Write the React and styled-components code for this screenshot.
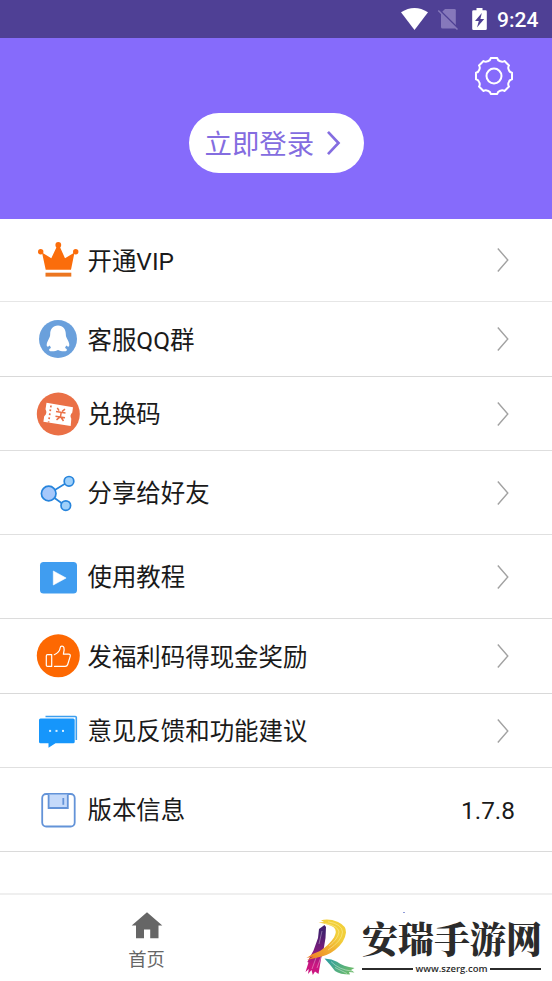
import React from 'react'
import styled, { createGlobalStyle } from 'styled-components'

const GlobalStyle = createGlobalStyle`
  * { box-sizing: border-box; }
  body {
    margin: 0;
    background: #fff;
    font-family: Roboto, "Noto Sans CJK SC", sans-serif;
  }
  svg { display: block; flex: none; overflow: visible; }
`

/* gear outline with eight soft teeth */
function gearPath(c, outer, inner) {
  const pt = (r, deg) => {
    const a = (deg * Math.PI) / 180
    return `${(c + r * Math.sin(a)).toFixed(2)} ${(c - r * Math.cos(a)).toFixed(2)}`
  }
  let d = `M${pt(outer, -10)}`
  for (let i = 0; i < 8; i++) {
    const t = i * 45
    d += `L${pt(outer, t + 10)}`
    d += `Q${pt(inner, t + 13)} ${pt(inner, t + 22.5)}`
    d += `Q${pt(inner, t + 32)} ${pt(outer, t + 35)}`
  }
  return d + 'Z'
}

function CrownIcon() {
  return (
    <svg width="44" height="44" viewBox="0 0 44 44" fill="#fb6d0b">
      <path d="M9.700 31.700 6 14.500 15.300 20.300 21.300 7.500h2L29 20.300 38.500 14.500 35 31.700Z" />
      <circle cx="4.700" cy="13.700" r="2.700" />
      <circle cx="22.300" cy="6.900" r="2.900" />
      <circle cx="39.700" cy="13.700" r="2.700" />
      <rect x="9.500" y="34.700" width="25.800" height="3.900" fill="#ec7620" />
    </svg>
  )
}

function QQIcon() {
  return (
    <svg width="44" height="44" viewBox="0 0 44 44">
      <circle cx="22" cy="22" r="19" fill="#6aa0dc" />
      <path
        fill="#fff"
        d="M22 8.500C16.800 8.500 14.200 12.200 14.200 17 14.200 19.500 13.500 20.500 12.400 22.700 10.900 25.500 10.200 28 11 29.300 11.700 30 12.800 29.500 13.800 28.600L15 31C13.400 31.700 12.700 32.600 13.200 33.500 14 34.800 19.500 34.600 22 33 24.500 34.600 30 34.800 30.800 33.500 31.300 32.600 30.600 31.700 29 31L30.200 28.600C31.200 29.500 32.300 30 33 29.300 33.800 28 33.100 25.500 31.600 22.700 30.500 20.500 29.800 19.500 29.800 17 29.800 12.200 27.200 8.500 22 8.500Z"
      />
    </svg>
  )
}

function TicketIcon() {
  return (
    <svg width="44" height="44" viewBox="0 0 44 44">
      <circle cx="22.300" cy="22" r="21.500" fill="#ea7046" />
      <path
        fill="#fff"
        d="M10.500 10.800 37 15.200 36.300 20.500Q33.300 23.200 35.300 26.800L34.700 34 7.400 29.700 8.200 24.200Q11.800 21.300 9.500 17.300Z"
      />
      <path d="m15 13.500-2.400 17" stroke="#ea7046" strokeWidth="1.700" strokeDasharray="1.800 2.200" />
      <path
        d="m21.300 15.800 1.700 2.800m6-1.400-2.800 2.200m-6.200.1 9.500 1.500M19.500 24.200l9.500 1.500M25.200 20.300l-.7 4.200-4 3.300m4-3.300 3 4.500"
        stroke="#ea7046"
        strokeWidth="1.500"
        fill="none"
      />
    </svg>
  )
}

function ShareIcon() {
  return (
    <svg width="44" height="44" viewBox="0 0 44 44" stroke="#2684dc" strokeWidth="1.700">
      <path d="M18 19.500 29 12.800M18.500 27l7 5" />
      <circle cx="12.700" cy="22.500" r="7.300" fill="#a6c8fb" />
      <circle cx="33" cy="10.300" r="4.800" fill="#9fd0fa" />
      <circle cx="29.800" cy="34.600" r="4.800" fill="#9fd0fa" />
    </svg>
  )
}

function PlayIcon() {
  return (
    <svg width="44" height="44" viewBox="0 0 44 44">
      <rect x="4" y="6.900" width="37" height="31.700" rx="3.600" fill="#409df0" />
      <path d="M17.300 16v14l12.800-7Z" fill="#fff" stroke="#fff" strokeWidth=".6" strokeLinejoin="round" />
    </svg>
  )
}

function ThumbIcon() {
  return (
    <svg width="44" height="44" viewBox="0 0 44 44">
      <circle cx="22.300" cy="21.800" r="21.500" fill="#fd6802" />
      <g fill="none" stroke="#fff" strokeWidth="1.200" strokeLinecap="round" strokeLinejoin="round">
        <path d="M11.500 20.700h4.200v11.700h-4.200q-1.200 0-1.200-1.200v-9.300q0-1.200 1.200-1.200Z" />
        <path d="M18.500 32.400h10.700q1.900 0 2.500-1.900l2.500-8.200q.5-2.100-1.600-2.100h-5.200c.8-2.700 1-5.200.5-6.700-.7-1.900-3.500-1.700-3.700.3-.4 3.200-2.800 5.700-5.900 6.900" />
      </g>
    </svg>
  )
}

function MessageIcon() {
  return (
    <svg width="44" height="44" viewBox="0 0 44 44">
      <path d="M9.500 7.500H39.300Q40.300 7.500 40.300 8.500V31" fill="none" stroke="#3d9ff0" strokeWidth="1.600" />
      <path
        d="M4.500 9.500H37.200Q38.700 9.500 38.700 11V32.700Q38.700 34.200 37.200 34.200H19.500L12.500 38.800V34.200H4.500Q3 34.200 3 32.700V11Q3 9.500 4.500 9.500Z"
        fill="#1696fb"
      />
      <g fill="#d8efff">
        <rect x="13.100" y="20.900" width="2" height="2" />
        <rect x="19.500" y="20.900" width="2" height="2" />
        <rect x="26" y="20.900" width="2" height="2" />
      </g>
    </svg>
  )
}

function FloppyIcon() {
  return (
    <svg width="44" height="44" viewBox="0 0 44 44" fill="none" stroke="#6393d8" strokeWidth="1.800">
      <rect x="6.200" y="6" width="32.500" height="32.500" rx="4" />
      <path d="M12.600 6.500V20H31.800V6.500" fill="#c5dafa" />
      <path d="M27.300 10v6.800" />
    </svg>
  )
}

function Arrow() {
  return (
    <svg width="18" height="24" viewBox="0 0 18 24" fill="none" stroke="#a2a2a2" strokeWidth="1.400">
      <path d="M.8.500 10.800 12 .8 23.500" />
    </svg>
  )
}

function BrandMark() {
  return (
    <svg width="54" height="64" viewBox="0 0 54 64" fill="none">
      <defs>
        <linearGradient id="stem" x1="0" y1="0" x2="0" y2="1">
          <stop offset=".15" stopColor="#43206f" />
          <stop offset=".5" stopColor="#7c1c7c" />
          <stop offset=".8" stopColor="#cb1580" />
        </linearGradient>
        <linearGradient id="bowl" x1="1" y1="0" x2="0" y2="1">
          <stop offset=".3" stopColor="#f2cf3a" />
          <stop offset="1" stopColor="#ee7a23" />
        </linearGradient>
        <linearGradient id="leg" x1="0" y1="0" x2="1" y2=".4">
          <stop offset="0" stopColor="#2b9ba6" />
          <stop offset="1" stopColor="#69b96c" />
        </linearGradient>
      </defs>
      <path d="M99 -1.500h2" stroke="#8f9bd8" strokeWidth="1" />
      <path
        fill="url(#stem)"
        d="M15 15 20.500 11 22 13 21.500 24 19.500 36 17 45 14.500 60 11 57.500 8.800 61 7.500 56 4 60 4.800 55 1.500 58 4.500 48.500 3.300 48 9.500 36.500 14 24Z"
      />
      <path stroke="#fff" strokeWidth=".35" d="m13 41-5 14m9-12-4 11m5-37-3 13" />
      <path
        fill="url(#bowl)"
        d="M14.500 8.500 20 8 17 6.300Q25 4.300 34 8 42.500 12 42 18.500 41 28 31 36 24 41.500 13.500 43.500L3 46 9.500 42.500 2.500 44Q8 39.500 16 37 25 31 30 23.500 33.500 17 30 13.500 25.500 10.500 14.500 8.500Z"
      />
      <path stroke="#fdf3b0" strokeWidth=".5" d="M24 7.800Q38 10 38.500 18 38 27 24 36M21 9.400Q34.500 12 35 18 34 25 25 32" />
      <path
        fill="url(#leg)"
        d="M20.500 44.500Q28 45 33 47.800 39 52.500 50.500 54L47 56 50.500 58.500 45 58 46 60.500Q36 60.500 31 57 27 51.500 20.500 44.500Z"
      />
      <path stroke="#fff" strokeWidth=".4" d="M27 47.500Q35 56 48 57M31 53.500 43 59.500" />
    </svg>
  )
}

const items = [
  { label: '开通VIP', icon: CrownIcon, height: 83, line: '#e6e6e6' },
  { label: '客服QQ群', icon: QQIcon, height: 75, line: '#d9d9d9' },
  { label: '兑换码', icon: TicketIcon, height: 74, line: '#dedede' },
  { label: '分享给好友', icon: ShareIcon, height: 84, line: '#e0e0e0' },
  { label: '使用教程', icon: PlayIcon, height: 84, line: '#dcdcdc' },
  { label: '发福利码得现金奖励', icon: ThumbIcon, height: 75, line: '#d9d9d9' },
  { label: '意见反馈和功能建议', icon: MessageIcon, height: 74, line: '#e0e0e0' },
  { label: '版本信息', icon: FloppyIcon, height: 84, line: '#dadada', value: '1.7.8' },
]

export default function App() {
  return (
    <Screen>
      <GlobalStyle />
      <StatusBar>
        <svg width="27" height="22" viewBox="0 0 27 22" fill="#fff">
          <path d="M0 4.300Q13.500-4.300 27 4.300L13.500 22Z" />
        </svg>
        <svg width="20" height="22" viewBox="0 0 20 22">
          <path d="M7 1h9.500q1.300 0 1.300 1.300V20.500H4.500q-1.500 0-1.500-1.500V5Z" fill="#8678bb" />
          <path d="M1.500 2.200 20 20.300" stroke="#4f4095" strokeWidth="1.800" />
          <path d="M.3 2.500 19.500 21.500" stroke="#8678bb" strokeWidth="1.500" />
        </svg>
        <svg width="15" height="22" viewBox="0 0 15 22">
          <path d="M4.500 0h6v2.300h3q1.300 0 1.300 1.300V20.700Q14.800 22 13.500 22H1.500Q.2 22 .2 20.700V3.600Q.2 2.300 1.500 2.300h3Z" fill="#fff" />
          <path d="M9.800 5 3 13H6.800L5 19.500 12.200 11H8.400Z" fill="#4f4095" />
        </svg>
        <Clock>9:24</Clock>
      </StatusBar>
      <Header>
        <SettingsButton aria-label="设置">
          <svg width="40" height="40" viewBox="0 0 40 40" fill="none" stroke="#fff" strokeWidth="2" strokeLinejoin="round">
            <path d={gearPath(20, 18.3, 16)} />
            <circle cx="20" cy="20" r="7.500" />
          </svg>
        </SettingsButton>
        <LoginButton>
          <span>立即登录</span>
          <svg width="14" height="24" viewBox="0 0 14 24" fill="none" stroke="#846de0" strokeWidth="2.700">
            <path d="M1 .8 11.500 12 1 23.200" />
          </svg>
        </LoginButton>
      </Header>
      <Menu>
        {items.map(({ label, icon: Icon, height, line, value }) => (
          <Row key={label} $height={height} $line={line}>
            <Icon />
            <Label>{label}</Label>
            {value ? <Value>{value}</Value> : <Arrow />}
          </Row>
        ))}
      </Menu>
      <TabBar>
        <Tab>
          <svg width="32" height="27" viewBox="0 0 32 27" fill="#666">
            <path d="M16 .3 31.300 13.500H27.500V26.300H19.200V17.500H13V26.300H5V13.500H.7Z" />
          </svg>
          首页
        </Tab>
        <Brand>
          <BrandMark />
          <BrandText>
            <BrandName>安瑞手游网</BrandName>
            <BrandUrl>www.szerg.com</BrandUrl>
          </BrandText>
        </Brand>
      </TabBar>
    </Screen>
  )
}

const Screen = styled.div`
  display: flex;
  flex-direction: column;
  width: 552px;
  height: 981px;
  overflow: hidden;
  background: #fff;
`

const StatusBar = styled.div`
  display: flex;
  align-items: center;
  height: 38px;
  padding-left: 401px;
  background: #4f4095;

  svg + svg {
    margin-left: 10px;
  }
  svg:nth-of-type(3) {
    margin-left: 14px;
  }
`

const Clock = styled.span`
  margin-left: 10px;
  padding-top: 2px;
  font-size: 21px;
  font-weight: 500;
  line-height: 24px;
  color: #fff;
`

const Header = styled.header`
  display: flex;
  flex-direction: column;
  align-items: center;
  height: 181px;
  background: #866bfb;
`

const SettingsButton = styled.button`
  align-self: flex-end;
  margin: 18px 38px 0 0;
  padding: 0;
  border: 0;
  background: none;
`

const LoginButton = styled.button`
  display: flex;
  align-items: center;
  gap: 13px;
  width: 175px;
  height: 60px;
  margin-top: 17px;
  padding: 0 0 0 16px;
  border: 0;
  border-radius: 30px;
  background: #fff;
  color: #846de0;
  font-family: inherit;
  font-size: 27.4px;

  span {
    padding-bottom: 2px;
  }
`

const Menu = styled.div`
  display: flex;
  flex-direction: column;
`

const Row = styled.div`
  display: flex;
  align-items: center;
  height: ${(p) => p.$height}px;
  padding: 0 37px 0 36px;
  border-bottom: 1px solid ${(p) => p.$line};
`

const Label = styled.span`
  flex: 1;
  margin-left: 7.5px;
  padding-top: 3px;
  font-size: 24.45px;
  line-height: 36px;
  color: #1a1a1a;
`

const Value = styled.span`
  padding-top: 2px;
  font-size: 24.4px;
  color: #1a1a1a;
`

const TabBar = styled.nav`
  display: flex;
  height: 88px;
  margin-top: auto;
  border-top: 2px solid #efefef;
`

const Tab = styled.div`
  display: flex;
  flex-direction: column;
  align-items: center;
  gap: 8px;
  width: 293px;
  padding-top: 17px;
  font-size: 18.3px;
  line-height: 26px;
  color: #666;
`

const Brand = styled.div`
  display: flex;
  padding: 19px 0 0 11px;
`

const BrandText = styled.div`
  width: 179px;
  margin-left: 4px;
`

const BrandName = styled.div`
  height: 50px;
  font-family: "Noto Serif CJK SC", "Noto Sans CJK SC", serif;
  font-size: 36px;
  font-weight: 900;
  line-height: 48px;
  white-space: nowrap;
  color: #2b2b2b;
`

const BrandUrl = styled.div`
  display: flex;
  align-items: center;
  gap: 2px;
  height: 10px;
  font-family: "Open Sans", sans-serif;
  font-size: 9.5px;
  font-weight: 600;
  line-height: 10px;
  color: #2b2b2b;

  &::before,
  &::after {
    content: "";
    flex: 1;
    height: 2px;
    background: #2b2b2b;
  }
`
